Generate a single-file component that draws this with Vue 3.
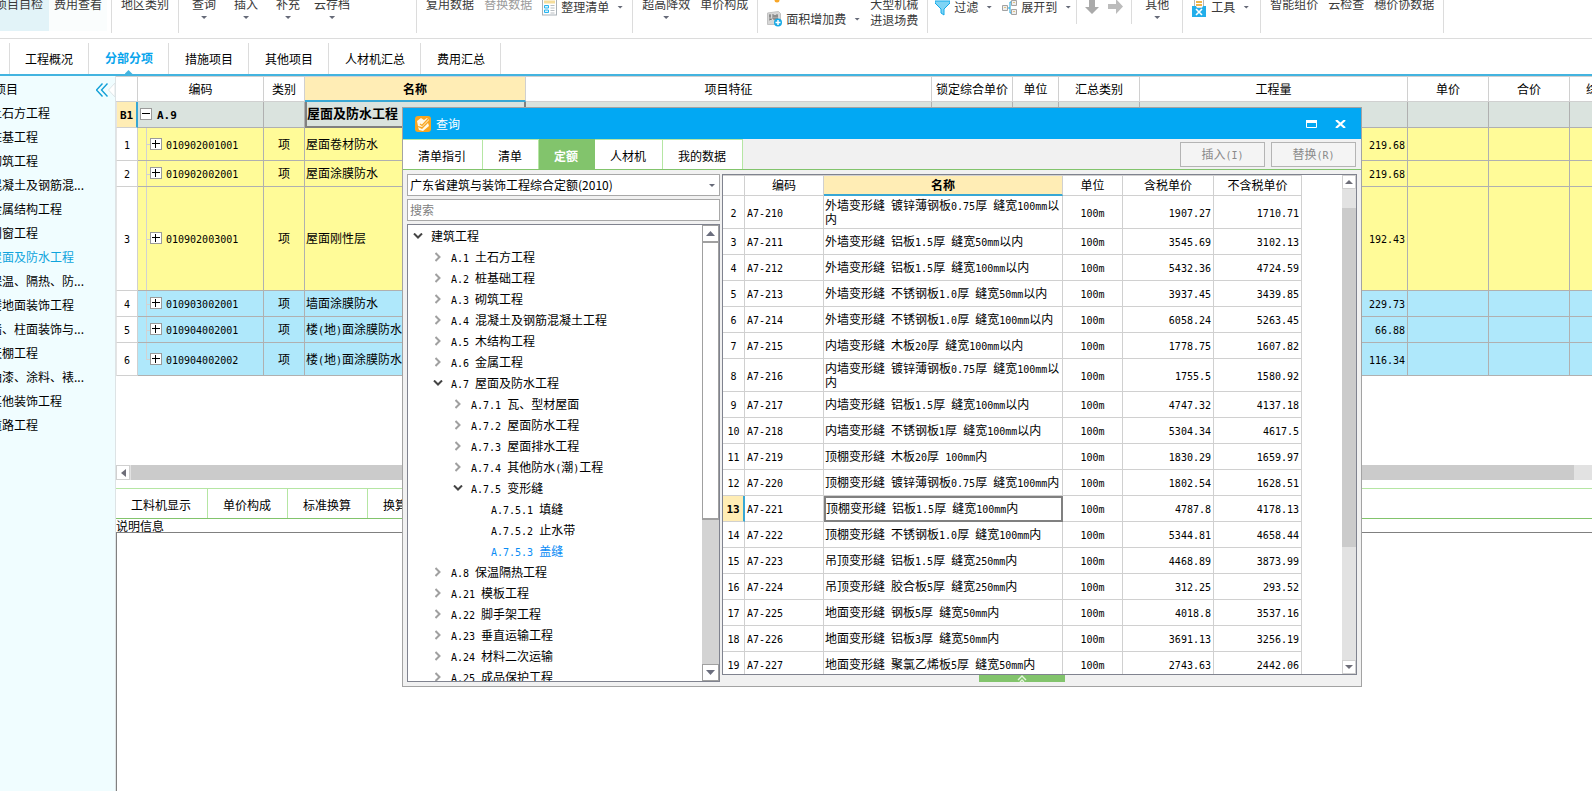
<script setup>
import { h, ref } from 'vue'

// Latin runs use a narrower monospaced face so one CJK glyph spans two of them.
const Txt = (props) =>
  h('span', props.t.split(/([\x20-\x7e]+)/).filter(Boolean).map((part) =>
    /^[\x20-\x7e]+$/.test(part) ? h('span', { class: 'latin' }, part) : part))
Txt.props = ['t']

const tabs = ['工程概况', '分部分项', '措施项目', '其他项目', '人材机汇总', '费用汇总']
const sections = ['土石方工程', '桩基工程', '砌筑工程', '混凝土及钢筋混...', '金属结构工程', '门窗工程', '屋面及防水工程',
  '保温、隔热、防...', '楼地面装饰工程', '墙、柱面装饰与...', '天棚工程', '油漆、涂料、裱...', '其他装饰工程', '道路工程']
const items = [
  { n: '1', code: '010902001001', name: '屋面卷材防水', qty: '219.68', cls: 'yellow tall' },
  { n: '2', code: '010902002001', name: '屋面涂膜防水', qty: '219.68', cls: 'yellow' },
  { n: '3', code: '010902003001', name: '屋面刚性层', qty: '192.43', cls: 'yellow huge' },
  { n: '4', code: '010903002001', name: '墙面涂膜防水', qty: '229.73', cls: 'blue' },
  { n: '5', code: '010904002001', name: '楼(地)面涂膜防水', qty: '66.88', cls: 'blue' },
  { n: '6', code: '010904002002', name: '楼(地)面涂膜防水', qty: '116.34', cls: 'blue tall last' }
]
const bottomTabs = ['工料机显示', '单价构成', '标准换算', '换算信息']
const dialogTabs = ['清单指引', '清单', '定额', '人材机', '我的数据']
const tree = [
  [0, 'open', '建筑工程'], [1, 'shut', 'A.1 土石方工程'], [1, 'shut', 'A.2 桩基础工程'], [1, 'shut', 'A.3 砌筑工程'],
  [1, 'shut', 'A.4 混凝土及钢筋混凝土工程'], [1, 'shut', 'A.5 木结构工程'], [1, 'shut', 'A.6 金属工程'],
  [1, 'open', 'A.7 屋面及防水工程'], [2, 'shut', 'A.7.1 瓦、型材屋面'], [2, 'shut', 'A.7.2 屋面防水工程'],
  [2, 'shut', 'A.7.3 屋面排水工程'], [2, 'shut', 'A.7.4 其他防水(潮)工程'], [2, 'open', 'A.7.5 变形缝'],
  [3, '', 'A.7.5.1 填缝'], [3, '', 'A.7.5.2 止水带'], [3, '', 'A.7.5.3 盖缝'], [1, 'shut', 'A.8 保温隔热工程'],
  [1, 'shut', 'A.21 模板工程'], [1, 'shut', 'A.22 脚手架工程'], [1, 'shut', 'A.23 垂直运输工程'],
  [1, 'shut', 'A.24 材料二次运输'], [1, 'shut', 'A.25 成品保护工程']
]
const quotas = [
  ['2', 'A7-210', '外墙变形缝 镀锌薄钢板0.75厚 缝宽100mm以内', '1907.27', '1710.71'],
  ['3', 'A7-211', '外墙变形缝 铝板1.5厚 缝宽50mm以内', '3545.69', '3102.13'],
  ['4', 'A7-212', '外墙变形缝 铝板1.5厚 缝宽100mm以内', '5432.36', '4724.59'],
  ['5', 'A7-213', '外墙变形缝 不锈钢板1.0厚 缝宽50mm以内', '3937.45', '3439.85'],
  ['6', 'A7-214', '外墙变形缝 不锈钢板1.0厚 缝宽100mm以内', '6058.24', '5263.45'],
  ['7', 'A7-215', '内墙变形缝 木板20厚 缝宽100mm以内', '1778.75', '1607.82'],
  ['8', 'A7-216', '内墙变形缝 镀锌薄钢板0.75厚 缝宽100mm以内', '1755.5', '1580.92'],
  ['9', 'A7-217', '内墙变形缝 铝板1.5厚 缝宽100mm以内', '4747.32', '4137.18'],
  ['10', 'A7-218', '内墙变形缝 不锈钢板1厚 缝宽100mm以内', '5304.34', '4617.5'],
  ['11', 'A7-219', '顶棚变形缝 木板20厚 100mm内', '1830.29', '1659.97'],
  ['12', 'A7-220', '顶棚变形缝 镀锌薄钢板0.75厚 缝宽100mm内', '1802.54', '1628.51'],
  ['13', 'A7-221', '顶棚变形缝 铝板1.5厚 缝宽100mm内', '4787.8', '4178.13'],
  ['14', 'A7-222', '顶棚变形缝 不锈钢板1.0厚 缝宽100mm内', '5344.81', '4658.44'],
  ['15', 'A7-223', '吊顶变形缝 铝板1.5厚 缝宽250mm内', '4468.89', '3873.99'],
  ['16', 'A7-224', '吊顶变形缝 胶合板5厚 缝宽250mm内', '312.25', '293.52'],
  ['17', 'A7-225', '地面变形缝 钢板5厚 缝宽50mm内', '4018.8', '3537.16'],
  ['18', 'A7-226', '地面变形缝 铝板3厚 缝宽50mm内', '3691.13', '3256.19'],
  ['19', 'A7-227', '地面变形缝 聚氯乙烯板5厚 缝宽50mm内', '2743.63', '2442.06']
]
const book = ref('广东省建筑与装饰工程综合定额(2010)')
const keyword = ref('')
</script>

<template>
  <div class="app">
    <header class="ribbon">
      <div class="group first">
        <button class="rb on">项目自检</button>
        <button class="rb">费用查看</button>
      </div>
      <div class="group"><button class="rb">地区类别</button></div>
      <div class="group query">
        <button v-for="t in ['查询', '插入', '补充']" :key="t" class="rb wide">{{ t }}<i class="caret"></i></button>
        <button class="rb">云存档<i class="caret"></i></button>
      </div>
      <div class="group">
        <button class="rb">复用数据</button>
        <button class="rb dim">替换数据</button>
        <button class="rb side">
          <svg width="15" height="18" viewBox="0 0 15 18">
            <rect x="0.5" y="-3" width="14" height="20" fill="#fff" stroke="#a9b1b7" />
            <path d="M2 4h11" stroke="#f5dd9b" stroke-width="3" />
            <path d="M2.500 7.500h4v2.500h-4zM2.500 12h4v2.500h-4z" fill="#d9f3fd" stroke="#28b4ee" />
            <path d="M8.500 7.500h4M8.500 10h4M8.500 12.500h4M8.500 15h4" stroke="#b9bec2" />
          </svg>
          整理清单<i class="caret"></i>
        </button>
      </div>
      <div class="group">
        <button class="rb">超高降效<i class="caret"></i></button>
        <button class="rb">单价构成</button>
      </div>
      <div class="group">
        <div class="stack">
          <svg class="dot" width="6" height="5" viewBox="0 0 6 5"><circle cx="3" cy="2" r="2.500" fill="#f8a728" /></svg>
          <button class="rb side low">
            <svg width="15" height="16" viewBox="0 0 15 16">
              <path d="M0.500 2l11-1.500 2 2v9l-2 2H0.500z" fill="#d6d6d6" stroke="#c2c2c2" />
              <path d="M2 5h2M3 3v5M2 9l3-1M6 3v5M8 4v5M10 3v5M6 5h5M6 8h5" stroke="#777" fill="none" />
              <circle cx="11" cy="11.500" r="4" fill="#16a9e5" />
              <path d="M11 9v5M8.500 11.500h5" stroke="#fff" stroke-width="1.500" />
            </svg>
            面积增加费<i class="caret"></i>
          </button>
        </div>
        <button class="rb">大型机械<br>进退场费</button>
      </div>
      <div class="group short tight">
        <button class="rb side">
          <svg width="15" height="18" viewBox="0 0 15 18">
            <path d="M0 3h15v2L9 11v6l-3-2v-4L0 5z" fill="#7fd4f5" stroke="#15a9e8" />
          </svg>
          过滤<i class="caret"></i>
        </button>
        <button class="rb side">
          <svg width="15" height="18" viewBox="0 0 15 18">
            <path d="M5 10h3V4h2M8 10v5h2" fill="none" stroke="#1aa6df" />
            <path d="M0.500 7.500h5v5h-5zM9.500 2.500h5v5h-5zM9.500 11.500h5v5h-5z" fill="#eee" stroke="#a3a3a3" />
            <path d="M2 9.500h2M11 4.500h2M11 13.500h2" stroke="#e2c27d" />
          </svg>
          展开到<i class="caret"></i>
        </button>
      </div>
      <div class="group short arrows">
        <button class="rb" aria-label="下移"><svg width="14" height="18" viewBox="0 0 14 18"><path d="M4 0h6v11h4l-7 7-7-7h4z" fill="#aaa" /></svg></button>
        <button class="rb" aria-label="右移"><svg width="15" height="18" viewBox="0 0 15 18"><path d="M0 8h8V3l7 7.500L8 18v-5H0z" fill="#bcbcbc" /></svg></button>
      </div>
      <div class="group other"><button class="rb wide">其他<i class="caret"></i></button></div>
      <div class="group tools">
        <button class="rb side">
          <svg width="15" height="19" viewBox="0 0 15 19">
            <path d="M2.500 0h9v10h-9z" fill="#fff" stroke="#b6b6b6" />
            <path d="M4 4h6M4 7h6" stroke="#f0b64a" stroke-width="2" />
            <path d="M0 8h4l1 2h5l1-2h3v11H0z" fill="#22aeea" />
            <path d="M4 11l6 6M10 11l-6 6" stroke="#fff" stroke-width="1.600" />
          </svg>
          工具<i class="caret"></i>
        </button>
      </div>
      <div class="group">
        <button v-for="t in ['智能组价', '云检查', '穗价协数据']" :key="t" class="rb">{{ t }}</button>
      </div>
    </header>

    <nav class="tabs">
      <button v-for="(t, i) in tabs" :key="t" :class="{ active: i === 1 }">{{ t }}</button>
    </nav>

    <div class="work">
      <aside class="side-panel">
        <div class="side-head">
          <span>项目</span>
          <button class="fold" aria-label="收起">
            <svg width="12" height="14" viewBox="0 0 12 14"><path d="M6.500 0.500l-6 6.500 6 6.500M11.500 0.500l-6 6.500 6 6.500" fill="none" stroke="#12a0d8" stroke-width="1.400" /></svg>
          </button>
          <svg class="notch" width="7" height="14" viewBox="0 0 7 14"><path d="M7 0L0.500 7l6.500 7z" fill="#fff" stroke="#dde5e7" /></svg>
        </div>
        <ul>
          <li v-for="s in sections" :key="s"><a href="#" :class="{ current: s === '屋面及防水工程' }">{{ s }}</a></li>
        </ul>
      </aside>

      <main class="main">
        <div class="sheet-wrap">
          <table class="sheet">
            <colgroup>
              <col class="c22"><col class="c126"><col class="c41"><col class="c221"><col class="c406"><col class="c81"><col class="c46">
              <col class="c81"><col class="c268"><col class="c81"><col class="c81"><col class="c81">
            </colgroup>
            <thead>
              <tr>
                <th></th><th>编码</th><th>类别</th><th class="picked">名称</th><th>项目特征</th><th>锁定综合单价</th><th>单位</th>
                <th>汇总类别</th><th>工程量</th><th>单价</th><th>合价</th><th>综合单价</th>
              </tr>
            </thead>
            <tbody>
              <tr class="section">
                <td class="idx mark"><Txt t="B1" /></td>
                <td class="code"><span class="cell"><button class="box" aria-label="折叠"><svg width="8" height="8"><path d="M0 3.500h8" stroke="#000" /></svg></button><Txt t="A.9" /></span></td>
                <td></td><td class="name cursor">屋面及防水工程</td>
                <td v-for="k in 8" :key="k"></td>
              </tr>
              <tr v-for="r in items" :key="r.n" :class="r.cls">
                <td class="idx"><Txt :t="r.n" /></td>
                <td class="code child"><span class="cell"><button class="box" aria-label="展开"><svg width="8" height="8"><path d="M0 3.500h8M3.500 0v8" stroke="#000" /></svg></button><Txt :t="r.code" /></span></td>
                <td class="mid">项</td>
                <td class="name"><Txt :t="r.name" /></td>
                <td></td><td></td><td></td><td></td>
                <td class="num"><Txt :t="r.qty" /></td>
                <td></td><td></td><td></td>
              </tr>
            </tbody>
          </table>
        </div>
        <div class="hbar">
          <button aria-label="向左"><svg width="5" height="8" viewBox="0 0 5 8"><path d="M5 0v8L0 4z" fill="#6e6e78" /></svg></button>
          <div class="hthumb"></div>
        </div>
        <nav class="sub-tabs"><button v-for="t in bottomTabs" :key="t">{{ t }}</button></nav>
        <div class="note-title">说明信息</div>
        <div class="note"></div>
      </main>
    </div>

    <section class="dialog" role="dialog" aria-label="查询">
      <div class="title">
        <svg width="16" height="16" viewBox="0 0 16 16">
          <rect width="16" height="16" rx="3" fill="#f8a51f" />
          <path d="M2 5l4-3 3 2 3-2 2 2-7 7-4-1zM3 11l4 2 6-6 1 3-6 5-4-1z" fill="#fff8e6" />
          <path d="M5 8l2 1.500L13 3" fill="none" stroke="#f8a51f" stroke-width="1.300" />
        </svg>
        <span>查询</span>
        <button aria-label="最大化"><svg width="11" height="8" viewBox="0 0 11 8"><path d="M0.500 0.500h10v7h-10z" fill="none" stroke="#fff" /><path d="M0 1.500h11" stroke="#fff" stroke-width="3" /></svg></button>
        <button aria-label="关闭"><svg width="11" height="8" viewBox="0 0 11 8"><path d="M1 0l9 8M10 0L1 8" stroke="#fff" stroke-width="2.200" /></svg></button>
      </div>
      <div class="dialog-bar">
        <nav class="dialog-tabs"><button v-for="(t, i) in dialogTabs" :key="t" :class="{ active: i === 2 }">{{ t }}</button></nav>
        <div class="actions">
          <button disabled><Txt t="插入(I)" /></button>
          <button disabled><Txt t="替换(R)" /></button>
        </div>
      </div>
      <div class="dialog-body">
        <div class="picker">
          <div class="combo">
            <select v-model="book" aria-label="定额库"><option>广东省建筑与装饰工程综合定额(2010)</option></select>
            <i class="caret"></i>
          </div>
          <input v-model="keyword" class="search" type="text" placeholder="搜索" aria-label="搜索">
          <div class="tree">
            <ul>
              <li v-for="n in tree" :key="n[2]" :class="['lv' + n[0], { chosen: n[2] === 'A.7.5.3 盖缝' }]">
                <span class="chev">
                  <svg v-if="n[1] === 'open'" width="10" height="6" viewBox="0 0 10 6"><path d="M1 0.500l4 4 4-4" fill="none" stroke="#444" stroke-width="2" /></svg>
                  <svg v-else-if="n[1]" width="6" height="10" viewBox="0 0 6 10"><path d="M0.500 1l4 4-4 4" fill="none" stroke="#a0a0a0" stroke-width="2" /></svg>
                </span>
                <Txt :t="n[2]" />
              </li>
            </ul>
            <div class="vbar dark">
              <button aria-label="向上"><svg width="9" height="5" viewBox="0 0 9 5"><path d="M0 5h9L4.500 0z" fill="#6b6e7e" /></svg></button>
              <div class="vthumb"></div>
              <button aria-label="向下"><svg width="9" height="5" viewBox="0 0 9 5"><path d="M0 0h9L4.500 5z" fill="#6b6e7e" /></svg></button>
            </div>
          </div>
        </div>
        <div class="result">
          <div class="quota-frame">
            <div class="quota-scroll">
              <table class="quota">
                <colgroup><col class="c22"><col class="c79"><col class="c239"><col class="c60"><col class="c91"><col class="c88"></colgroup>
                <thead><tr><th></th><th>编码</th><th class="picked">名称</th><th>单位</th><th>含税单价</th><th>不含税单价</th></tr></thead>
                <tbody>
                  <tr v-for="q in quotas" :key="q[0]" :class="{ tall: q[0] === '2' || q[0] === '8', now: q[0] === '13' }">
                    <td class="idx"><Txt :t="q[0]" /></td>
                    <td class="qcode"><Txt :t="q[1]" /></td>
                    <td class="name"><Txt :t="q[2]" /></td>
                    <td class="mid"><Txt t="100m" /></td>
                    <td class="num"><Txt :t="q[3]" /></td>
                    <td class="num"><Txt :t="q[4]" /></td>
                  </tr>
                </tbody>
              </table>
            </div>
            <div class="vbar">
              <button aria-label="向上"><svg width="8" height="4" viewBox="0 0 8 4"><path d="M0 4h8L4 0z" fill="#6e6e78" /></svg></button>
              <div class="vthumb"></div>
              <button aria-label="向下"><svg width="8" height="4" viewBox="0 0 8 4"><path d="M0 0h8L4 4z" fill="#6e6e78" /></svg></button>
            </div>
          </div>
          <button class="handle" aria-label="展开详情"><svg width="10" height="7" viewBox="0 0 10 7"><path d="M1 5l4-4 4 4M3 7l2-2 2 2" fill="none" stroke="#e4f6dd" stroke-width="1.400" /></svg></button>
        </div>
      </div>
    </section>
  </div>
</template>

<style>
body { background: #fff; }
.latin {
  font-family: "DejaVu Sans Mono", "Liberation Mono", monospace;
  font-size: 10px;
  line-height: 1;
}
.section .latin, .now .idx .latin { font-size: 11px; }
</style>

<style scoped>
.app {
  position: relative;
  display: flex;
  flex-direction: column;
  height: 100vh;
  min-height: 600px;
  overflow: hidden;
  font: 12px/14px "Noto Sans CJK SC", sans-serif;
  color: #000;
}
.app *, .app *::before, .app *::after { box-sizing: border-box; }
button, input, select { font: inherit; color: inherit; margin: 0; padding: 0; border: 0; background: none; border-radius: 0; }
ul { list-style: none; margin: 0; padding: 0; }
svg { display: block; flex: none; }
.caret { display: block; flex: none; width: 6px; height: 3px; background: #666a78; clip-path: polygon(0 0, 100% 0, 50% 100%); }

/* ribbon */
.ribbon { display: flex; flex: none; height: 39px; border-bottom: 1px solid #dcdcdc; overflow: hidden; color: #3a3a3a; }
.group { display: flex; flex: none; align-items: flex-start; height: 33px; padding: 0 4px; border-right: 1px solid #dcdcdc; }
.group.short { height: 24px; }
.group.tight { padding: 0 0 0 2px; }
.group.first { padding-left: 0; margin-left: -10px; }
.group.query { padding-right: 61px; }
.rb { display: flex; flex: none; flex-direction: column; align-items: center; justify-content: flex-start; height: 35px; margin-top: -4px; padding: 0 5px; line-height: 16px; white-space: nowrap; }
.rb.wide { padding: 0 9px; }
.rb.on { background: #e2f3f8; padding-right: 6px; }
.rb.on + .rb { background: #fafdfd; }
.rb.dim { color: #9b9b9b; }
.rb .caret { margin-top: 4px; }
.rb.side { flex-direction: row; height: 22px; gap: 4px; }
.rb.side .caret { margin: 0 0 0 4px; }
.stack { position: relative; padding-top: 12px; }
.stack .dot { position: absolute; left: 12px; top: -2px; }
.rb.side.low { margin-top: -4px; }
.arrows .rb { padding: 0 4px; }
.group.arrows { padding: 0 4px; gap: 1px; }
.group.tools { padding: 0 6px 0 4px; }

/* main tabs */
.tabs { display: flex; flex: none; height: 37px; padding: 4px 0 0 9px; border-bottom: 2px solid #43b4e0; }
.tabs button { position: relative; padding: 0 15px 0 16px; border-right: 1px solid #dcdcdc; }
.tabs button:first-child { border-left: 1px solid #dcdcdc; padding-left: 15px; }
.tabs .active { color: #08a4ec; font-weight: 700; padding-bottom: 2px; }
.tabs .active::after { content: ""; position: absolute; left: 50%; bottom: 0; width: 8px; height: 4px; margin-left: -4px; background: #43b4e0; clip-path: polygon(50% 0, 100% 100%, 0 100%); }

/* section list */
.work { display: flex; flex: 1; min-height: 0; }
.side-panel { flex: 0 0 116px; background: #f0fdff; border-right: 1px solid #dde3e5; overflow: hidden; }
.side-head { position: relative; display: flex; align-items: center; justify-content: space-between; height: 25px; padding-right: 7px; }
.side-head span { margin-left: -6px; }
.fold svg { margin-top: 2px; }
.notch { position: absolute; right: 0; top: 7px; }
.side-panel li { height: 24px; margin-left: -10px; line-height: 24px; white-space: nowrap; }
.side-panel a { color: #000; text-decoration: none; }
.side-panel a.current { color: #0fa4dc; }

/* bill sheet */
.main { display: flex; flex-direction: column; flex: 1; min-width: 0; overflow: hidden; }
.sheet-wrap { flex: none; height: 389px; overflow: hidden; }
table { table-layout: fixed; border-collapse: separate; border-spacing: 0; width: 0; }
.c22 { width: 22px; } .c126 { width: 126px; } .c41 { width: 41px; } .c221 { width: 221px; } .c406 { width: 406px; }
.c81 { width: 81px; } .c46 { width: 46px; } .c268 { width: 268px; } .c79 { width: 79px; } .c239 { width: 239px; }
.c60 { width: 60px; } .c91 { width: 91px; } .c88 { width: 88px; }
th, td { padding: 0; border: 0 solid #d0d0d0; border-width: 0 1px 1px 0; overflow: hidden; text-align: left; vertical-align: middle; font-weight: 400; }
th { height: 26px; text-align: center; white-space: nowrap; background: #fff; border-top-width: 1px; }
th.picked { background: #ffedb5; border-bottom: 2px solid #38a7d4; font-weight: 700; }
td { height: 26px; padding-bottom: 2px; }
.idx, .mid { text-align: center; }
.name { padding-left: 1px; }
.num { padding-right: 2px; text-align: right; }
tr.tall td { height: 33px; padding-bottom: 0; }
tr.huge td { height: 104px; }
.sheet td { border-color: #b0b0b0; white-space: nowrap; }
.sheet td.idx { border-color: #d0d0d0; background: #fff; border-left: 1px solid #e4e4e4; }
.section td { background: #dae3de; font-size: 13px; font-weight: 700; }
.section .name.cursor { border: 2px solid #808080; border-top: 0; padding-left: 0; }
.sheet .section td.mark { background: #ffedb5; border-right: 2px solid #38a7d4; }
.yellow td { background: #fffb98; }
.blue td { background: #afe8fb; }
.cell { display: flex; align-items: center; gap: 5px; padding-left: 2px; }
.child { position: relative; }
.child .cell { padding-left: 12px; gap: 4px; }
.child::before { content: ""; position: absolute; left: 8px; top: 0; bottom: 0; width: 1px; background: #d2d2d2; }
.last .child::before { bottom: 50%; }
.child::after { content: ""; position: absolute; left: 8px; top: 50%; width: 4px; height: 1px; background: #d2d2d2; }
.box { display: flex; align-items: center; justify-content: center; flex: none; width: 12px; height: 12px; background: #fff; border: 1px solid #9a9a9a; }
.hbar { display: flex; flex: none; height: 15px; padding-right: 18px; background: #e2e2e2; }
.hbar button { display: flex; align-items: center; justify-content: center; width: 14px; background: #fff; border: 1px solid #d0d0d0; }
.hthumb { flex: 1; margin-left: 1px; background: #cbcbcb; }
.sub-tabs { display: flex; flex: none; height: 31px; margin-top: 8px; border-top: 1px solid #b5e6a3; border-bottom: 1px solid #82c46c; }
.sub-tabs button { padding: 2px 15px 0 15px; border-right: 1px solid #b5e6a3; }
.sub-tabs button:first-child { padding-right: 16px; }
.sub-tabs button + button { padding-right: 16px; }
.note-title { flex: none; height: 13px; line-height: 14px; }
.note { flex: 1; border: solid #808080; border-width: 1px 0 0 1px; }

/* lookup window */
.dialog { position: absolute; left: 402px; right: 230px; top: 107px; bottom: 104px; display: flex; flex-direction: column; background: #f1f1f1; border: 1px solid #a3a3a3; }
.title { display: flex; align-items: center; flex: none; height: 31px; padding: 0 15px 0 12px; background: #02a8f3; color: #fff; }
.title span { flex: 1; margin-left: 5px; }
.title button + button { margin-left: 18px; }
.dialog-bar { display: flex; justify-content: space-between; flex: none; height: 31px; border-bottom: 1px solid #82c46c; }
.dialog-tabs { display: flex; }
.dialog-tabs button { padding: 2px 16px 0 15px; background: #fff; border: solid #b5e6a3; border-width: 1px 1px 0 0; }
.dialog-tabs .active { background: #82c46c; color: #fff; font-weight: 700; border-color: #82c46c; }
.actions { display: flex; gap: 6px; padding: 3px 5px 0 0; }
.actions button { width: 85px; height: 25px; padding-bottom: 2px; background: #f4f4f4; border: 1px solid #b4b4b4; color: #8a8a8a; }
.dialog-body { display: flex; flex: 1; min-height: 0; gap: 2px; padding: 4px; }
.picker { display: flex; flex-direction: column; flex: 0 0 313px; gap: 3px; }
.combo { position: relative; flex: none; height: 22px; }
.combo select { appearance: none; display: block; width: 100%; height: 22px; padding: 0 20px 1px 2px; background: #fff; border: 1px solid #a8a8a8; }
.combo .caret { position: absolute; right: 5px; top: 10px; }
.search { flex: none; height: 22px; padding: 0 2px 1px; background: #fff; border: 1px solid #a8a8a8; }
.search::placeholder { color: #808080; opacity: 1; }
.tree { display: flex; flex: 1; min-height: 0; background: #fff; border: 1px solid #80838f; overflow: hidden; }
.tree ul { flex: 1; }
.tree li { display: flex; height: 21px; line-height: 21px; white-space: nowrap; }
.lv1 { padding-left: 20px; } .lv2 { padding-left: 40px; } .lv3 { padding-left: 60px; }
.chev { display: flex; align-items: center; justify-content: center; width: 19px; height: 21px; margin-right: 4px; }
.chosen { color: #0a8cf5; }
.vbar { display: flex; flex-direction: column; flex: 0 0 14px; background: #e2e2e2; }
.vbar button { display: flex; align-items: center; justify-content: center; flex: none; height: 14px; background: #fff; border: 1px solid #d0d0d0; }
.vbar button:last-child { margin-top: auto; }
.vthumb { flex: 0 0 68%; margin-top: 19px; background: #cbcbcb; }
.vbar.dark { flex-basis: 17px; background: #d3d3d3; }
.dark button { height: 17px; border-color: #a0a0a0; }
.dark .vthumb { flex-basis: 61%; margin: 0; background: #fff; border: 1px solid #a0a0a0; border-width: 1px 1px 2px; }
.result { display: flex; flex-direction: column; flex: 1; min-width: 0; }
.quota-frame { display: flex; flex: 1; min-height: 0; background: #fff; border: 1px solid #80838f; }
.quota-scroll { flex: 1; min-width: 0; overflow: hidden; }
.quota th { height: 21px; padding-bottom: 1px; }
.quota td.name { white-space: normal; }
.quota .qcode { padding-left: 2px; }
.quota .now .idx { background: #ffedb5; border-right: 2px solid #38a7d4; font-weight: 700; }
.quota .now .name { border: 2px solid #808080; padding-left: 0; }
.handle { display: flex; align-items: flex-end; justify-content: center; flex: none; align-self: center; width: 86px; height: 7px; margin-right: 35px; background: #82c46c; }
</style>
